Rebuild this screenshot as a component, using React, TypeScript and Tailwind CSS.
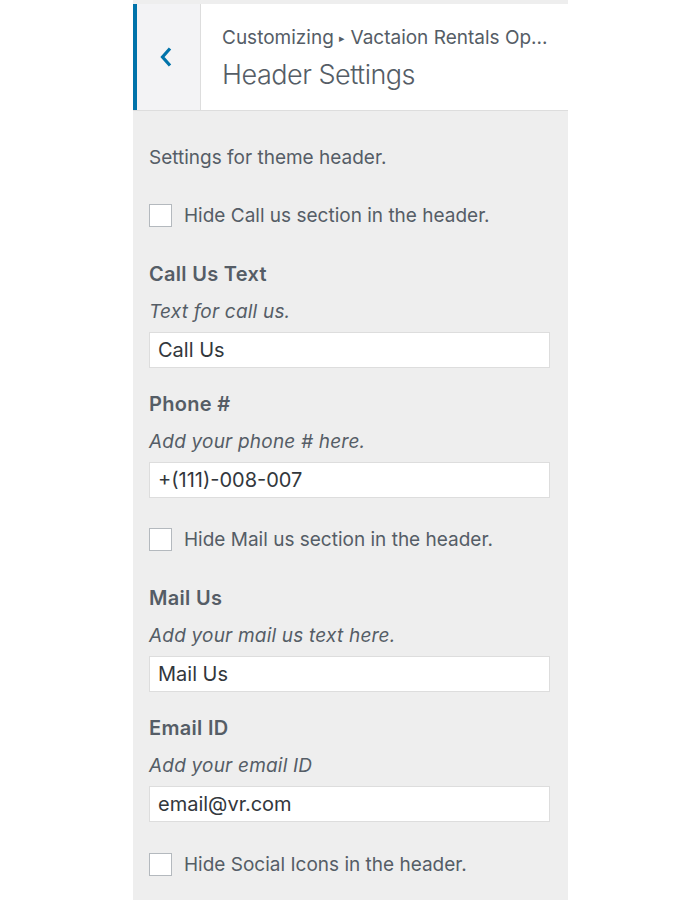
import React from "react";

const font = { fontFamily: "Inter, 'Liberation Sans', sans-serif" };

function Checkbox({ label }: { label: string }) {
  return (
    <div className="flex items-center h-[23px]">
      <div className="w-[23px] h-[23px] bg-white border border-[#b4b9be] shrink-0" />
      <span className="ml-[12px] text-[19px] leading-[24px] text-[#555d66]">{label}</span>
    </div>
  );
}

function Field({ title, desc, value }: { title: string; desc: string; value: string }) {
  return (
    <div className="flex flex-col">
      <div className="h-[26px] text-[20px] leading-[26px] font-semibold tracking-[0.3px] text-[#555d66]">{title}</div>
      <div className="mt-[13px] h-[24px] text-[19px] leading-[24px] italic tracking-[0.2px] text-[#555d66]">{desc}</div>
      <div className="mt-[8px] h-[36px] w-[401px] bg-white border border-[#dddddd] flex items-center pl-[8px] text-[20px] text-[#32373c]">
        {value}
      </div>
    </div>
  );
}

export default function App() {
  return (
    <div className="w-[700px] h-[900px] bg-white flex" style={font}>
      <div className="ml-[133px] w-[435px] h-[900px] bg-[#eeeeee] pt-[4px] flex flex-col">
        <div className="flex h-[107px] bg-white border-b border-[#dddddd]">
          <div className="w-[68px] h-full border-l-4 border-[#0073aa] border-r border-r-[#dddddd] bg-[#f3f3f5] flex items-center justify-center pr-[7px]">
            <svg width="15" height="22" viewBox="0 0 15 22" fill="none">
              <polyline points="12,2.5 4.5,11 12,19.5" stroke="#0073aa" strokeWidth="3.2" strokeLinecap="butt" strokeLinejoin="miter" />
            </svg>
          </div>
          <div className="flex flex-col pl-[21px] pt-[21px]">
            <div className="text-[19px] leading-[26px] text-[#555d66] whitespace-nowrap">
              Customizing <span className="text-[11px] align-middle relative top-[-1px]">▸</span> Vactaion Rentals Op...
            </div>
            <div className="text-[27px] leading-[36px] font-light tracking-[-0.5px] text-[#555d66] mt-[5px]">Header Settings</div>
          </div>
        </div>
        <div className="px-[16px] pt-[35px] flex flex-col">
          <div className="h-[24px] text-[19px] leading-[24px] text-[#555d66]">Settings for theme header.</div>
          <div className="mt-[34px]">
            <Checkbox label="Hide Call us section in the header." />
          </div>
          <div className="mt-[34px]">
            <Field title="Call Us Text" desc="Text for call us." value="Call Us" />
          </div>
          <div className="mt-[23px]">
            <Field title="Phone #" desc="Add your phone # here." value="+(111)-008-007" />
          </div>
          <div className="mt-[30px]">
            <Checkbox label="Hide Mail us section in the header." />
          </div>
          <div className="mt-[34px]">
            <Field title="Mail Us" desc="Add your mail us text here." value="Mail Us" />
          </div>
          <div className="mt-[23px]">
            <Field title="Email ID" desc="Add your email ID" value="email@vr.com" />
          </div>
          <div className="mt-[31px]">
            <Checkbox label="Hide Social Icons in the header." />
          </div>
        </div>
      </div>
    </div>
  );
}
